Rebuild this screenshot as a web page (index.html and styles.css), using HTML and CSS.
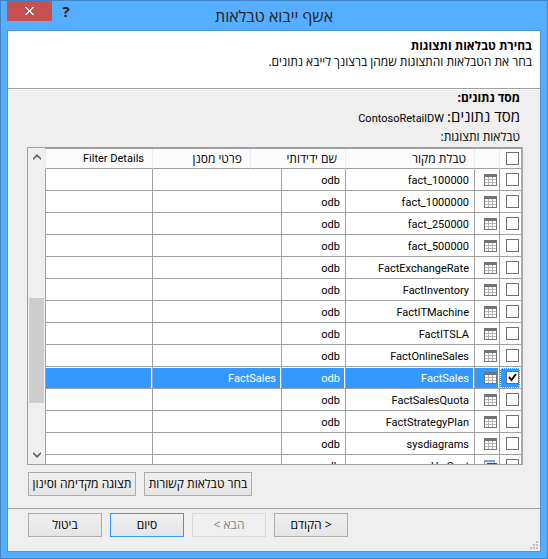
FILE: index.html
```html
<!DOCTYPE html>
<html lang="he" dir="rtl">
<head>
    <meta charset="UTF-8">
    <meta name="viewport" content="width=device-width, initial-scale=1.0">
    <title>אשף ייבוא טבלאות</title>
    <link rel="stylesheet" href="styles.css">
</head>
<body>
    <svg class="sprites" aria-hidden="true">
        <symbol id="table-icon" viewBox="0 0 13 12">
            <rect width="13" height="12" fill="#737373"/>
            <path fill="#fff" d="M1 3h3v2H1zM5 3h3v2H5zM9 3h3v2H9zM1 6h3v2H1zM5 6h3v2H5zM9 6h3v2H9zM1 9h3v2H1zM5 9h3v2H5zM9 9h3v2H9z"/>
            <path fill="#b4b4b4" d="M4 3h1v8H4zM8 3h1v8H8zM1 5h11v1H1zM1 8h11v1H1z"/>
        </symbol>
        <symbol id="view-icon" viewBox="0 0 13 12">
            <rect width="11" height="9" fill="#7da2e8"/>
            <rect x="1" y="2" width="9" height="6" fill="#dfe9fb"/>
            <rect x="3" y="3" width="10" height="9" fill="#3c4a63"/>
            <rect x="4" y="6" width="8" height="5" fill="#fff"/>
        </symbol>
    </svg>

    <div class="window">
        <header class="titlebar">
            <h1 class="window-title">אשף ייבוא טבלאות</h1>
            <button class="help" aria-label="עזרה">?</button>
            <button class="close" aria-label="סגור">
                <svg width="9" height="8" viewBox="0 0 9 8" shape-rendering="crispEdges"><path fill="#fff" d="M0 0h2v1H0zM7 0h2v1H7zM1 1h2v1H1zM6 1h2v1H6zM2 2h2v1H2zM5 2h2v1H5zM3 3h3v1H3zM3 4h3v1H3zM2 5h2v1H2zM5 5h2v1H5zM1 6h2v1H1zM6 6h2v1H6zM0 7h2v1H0zM7 7h2v1H7z"/></svg>
            </button>
        </header>

        <main class="dialog">
            <section class="intro">
                <h2 class="intro-title">בחירת טבלאות ותצוגות</h2>
                <p>בחר את הטבלאות והתצוגות שמהן ברצונך לייבא נתונים.</p>
            </section>

            <section class="content">
                <h3 class="source-title">מסד נתונים:</h3>
                <p class="source"><span class="source-label">מסד נתונים:</span> <span class="latin">ContosoRetailDW</span></p>
                <p class="grid-label" id="grid-label">טבלאות ותצוגות:</p>

                <div class="grid-box">
                    <div class="grid-view">
                        <table class="grid" aria-labelledby="grid-label">
                            <colgroup>
                                <col class="col-check">
                                <col class="col-icon">
                                <col class="col-source">
                                <col class="col-name">
                                <col class="col-shared">
                                <col class="col-filter">
                                <col>
                            </colgroup>
                            <thead>
                                <tr>
                                    <th class="check"><input type="checkbox" aria-label="בחר הכל"></th>
                                    <th></th>
                                    <th>טבלת מקור</th>
                                    <th colspan="2">שם ידידותי</th>
                                    <th>פרטי מסנן</th>
                                    <th class="latin">Filter Details</th>
                                </tr>
                            </thead>
                            <tbody id="rows" class="latin"></tbody>
                        </table>
                    </div>
                    <div class="scrollbar">
                        <svg class="arrow" width="8" height="6" viewBox="0 0 8 6"><path fill="#606060" d="M4 0L8 4V6L4 2.6L0 6V4z"/></svg>
                        <div class="track"><div class="thumb"></div></div>
                        <svg class="arrow" width="8" height="6" viewBox="0 0 8 6"><path fill="#606060" d="M4 6L0 2V0L4 3.4L8 0V2z"/></svg>
                    </div>
                </div>

                <div class="grid-actions">
                    <button class="btn wide">בחר טבלאות קשורות</button>
                    <button class="btn wide">תצוגה מקדימה וסינון</button>
                </div>
            </section>

            <footer class="footer">
                <button class="btn nav">&lt; הקודם</button>
                <button class="btn nav" disabled>הבא &gt;</button>
                <button class="btn nav default">סיום</button>
                <button class="btn nav">ביטול</button>
                <svg class="grip" width="8" height="8" viewBox="0 0 8 8"><path fill="#bfbfbf" d="M6 0h2v2H6zM3 3h2v2H3zM6 3h2v2H6zM0 6h2v2H0zM3 6h2v2H3zM6 6h2v2H6z"/></svg>
            </footer>
        </main>
    </div>

    <script src="script.js"></script>
</body>
</html>
```

FILE: styles.css
```css
* {
    margin: 0;
    padding: 0;
    box-sizing: border-box;
}

body {
    font-family: "Open Sans", "Liberation Sans", sans-serif;
    font-size: 12px;
    line-height: 16px;
    color: #000;
}

h1, h2, h3 {
    font-size: inherit;
}

button, input {
    font: inherit;
    color: inherit;
}

.latin {
    font-family: Roboto, sans-serif;
    font-size: 11px;
}

.sprites {
    position: absolute;
    width: 0;
    height: 0;
}

.window {
    display: flex;
    flex-direction: column;
    min-height: 100vh;
    padding: 0 6px 6px;
    border: 1px solid #3f86c6;
    background-color: #55aeff;
}

/* title bar */
.titlebar {
    display: grid;
    grid-template-columns: 1fr auto 1fr;
    height: 29px;
    align-items: start;
}

.window-title {
    grid-column: 2;
    font-size: 16px;
    font-weight: normal;
    line-height: 30px;
    color: #222;
}

.help, .close {
    grid-row: 1;
    grid-column: 3;
    justify-self: end;
    height: 20px;
    border: none;
}

.help {
    width: 28px;
    margin-left: 45px;
    background: none;
    font-size: 15px;
    font-weight: bold;
    color: #222;
}

.close {
    display: flex;
    align-items: center;
    justify-content: center;
    width: 45px;
    background-color: #c75050;
}

/* dialog */
.dialog {
    flex: 1;
    display: flex;
    flex-direction: column;
    border: 1px solid #4795dd;
    background-color: #efefef;
}

.intro {
    height: 59px;
    padding: 7px 8px;
    border-bottom: 1px solid #fff;
    background-color: #fff;
    box-shadow: inset 0 -1px 0 #a0a0a0;
}

.content {
    flex: 1;
    display: flex;
    flex-direction: column;
    padding: 0 17px 12px 19px;
}

.source-title, .source, .grid-label {
    padding-right: 3px;
}

.source {
    height: 20px;
    line-height: 20px;
}

.source-label {
    font-size: 15px;
}

.grid-label {
    line-height: 21px;
}

/* grid */
.grid-box {
    display: flex;
    height: 318px;
    border: 1px solid #a0a0a0;
    border-right: 2px solid #a6a6ae;
}

.grid-view {
    flex: 1;
    overflow: hidden;
    border-top: 1px solid #a0a0a0;
    background-color: #fff;
}

.grid {
    width: 100%;
    table-layout: fixed;
    border-collapse: separate;
    border-spacing: 0;
}

.col-check {
    width: 22px;
}

.col-icon {
    width: 25px;
}

.col-source {
    width: 129px;
}

.col-name {
    width: 64px;
}

.col-shared {
    width: 31px;
}

.col-filter {
    width: 98px;
}

.grid th {
    height: 20px;
    padding-right: 8px;
    border-bottom: 1px solid #a0a0a0;
    border-left: 1px solid #e3eefb;
    background-color: #fcfcfc;
    font-weight: normal;
    line-height: 19px;
    text-align: right;
}

.grid td {
    height: 22px;
    padding-top: 3px;
    padding-right: 5px;
    border-bottom: 1px solid #a0a0a0;
    border-left: 1px solid #a0a0a0;
    line-height: 18px;
    text-align: right;
    white-space: nowrap;
}

.grid .check, .grid .icon {
    padding-top: 0;
    padding-right: 2px;
}

.grid svg {
    display: block;
}

.grid input {
    appearance: none;
    display: block;
    width: 13px;
    height: 13px;
    border: 1px solid #707070;
    background-color: #fff;
}

.grid input:checked {
    background-image: url("data:image/svg+xml,%3Csvg xmlns='http://www.w3.org/2000/svg' viewBox='0 0 11 11'%3E%3Cpath d='M2 5L4.5 8L9 2' fill='none' stroke='%23000' stroke-width='2'/%3E%3C/svg%3E");
}

.grid .selected td {
    background-color: #3399ff;
    box-shadow: inset -1px 1px 0 #fff;
    color: #fff;
}

.grid .selected .check {
    outline: 1px dotted #fff;
    outline-offset: -2px;
}

/* scrollbar */
.scrollbar {
    display: flex;
    flex-direction: column;
    align-items: center;
    width: 17px;
    padding: 6px 0;
}

.track {
    flex: 1;
    width: 15px;
    padding-top: 138px;
}

.thumb {
    height: 105px;
    background-color: #cdcdcd;
}

/* buttons */
.grid-actions {
    display: flex;
    justify-content: flex-end;
    gap: 8px;
    margin-top: 7px;
    padding-left: 1px;
}

.btn {
    height: 24px;
    padding: 0 2px;
    border: 1px solid #acacac;
    background: linear-gradient(#f0f0f0, #e5e5e5);
    line-height: 20px;
    white-space: nowrap;
}

.btn:disabled {
    border-color: #d9d9d9;
    background: #efefef;
    color: #838383;
}

.default {
    border-color: #3399ff;
}

.nav {
    width: 74px;
}

.wide {
    width: 108px;
}

.footer {
    position: relative;
    display: flex;
    justify-content: flex-end;
    gap: 8px;
    padding: 4px 20px 14px;
    border-top: 1px solid #a0a0a0;
}

.grip {
    position: absolute;
    right: 2px;
    bottom: 2px;
}
```

FILE: script.js
```javascript
const tables = [
    { name: 'fact_100000' },
    { name: 'fact_1000000' },
    { name: 'fact_250000' },
    { name: 'fact_500000' },
    { name: 'FactExchangeRate' },
    { name: 'FactInventory' },
    { name: 'FactITMachine' },
    { name: 'FactITSLA' },
    { name: 'FactOnlineSales' },
    { name: 'FactSales', filter: 'FactSales', selected: true },
    { name: 'FactSalesQuota' },
    { name: 'FactStrategyPlan' },
    { name: 'sysdiagrams' },
    { name: 'VwCust', icon: 'view-icon' }
];

document.getElementById('rows').innerHTML = tables.map(table => `
    <tr class="${table.selected ? 'selected' : ''}">
        <td class="check"><input type="checkbox" aria-label="${table.name}" ${table.selected ? 'checked' : ''}></td>
        <td class="icon"><svg width="13" height="12"><use href="#${table.icon || 'table-icon'}"/></svg></td>
        <td>${table.name}</td>
        <td>odb</td>
        <td colspan="2">${table.filter || ''}</td>
        <td></td>
    </tr>
`).join('');
```
